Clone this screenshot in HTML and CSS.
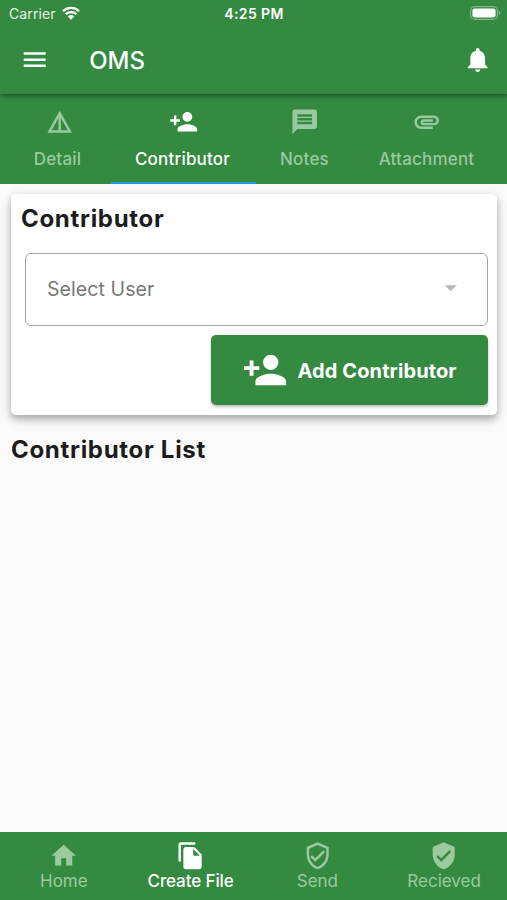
FILE: index.html
```html
<!DOCTYPE html>
<html lang="en">
<head>
<meta charset="utf-8">
<title>OMS</title>
<link rel="stylesheet" href="styles.css">
</head>
<body>
<div class="app">
  <header class="top">
    <div class="status">
      <div class="carrier"><span>Carrier</span>
        <svg class="wifi" viewBox="0 0 18 14"><path d="M1 5.1a11.8 11.8 0 0 1 16 0M3.7 8.2a7.8 7.8 0 0 1 10.6 0" fill="none" stroke="#fff" stroke-width="2.3"/><path d="M5.9 10.5a4.6 4.6 0 0 1 6.2 0L9 13.8z" fill="#fff"/></svg>
      </div>
      <div class="time">4:25 PM</div>
      <svg class="battery" viewBox="0 0 31 14"><rect x=".6" y=".6" width="26.8" height="12.8" rx="4" fill="none" stroke="#fff" stroke-opacity=".4" stroke-width="1.1"/><rect x="2.4" y="2.4" width="23.2" height="9.2" rx="2.4" fill="#fff"/><path d="M28.8 4.8q1.7.8 1.7 2.2t-1.7 2.2z" fill="#fff" fill-opacity=".4"/></svg>
    </div>
    <div class="bar">
      <svg class="icon" viewBox="0 0 24 24"><path d="M3 18h18v-2H3v2zm0-5h18v-2H3v2zm0-7v2h18V6H3z"/></svg>
      <h1>OMS</h1>
      <svg class="icon" viewBox="0 0 24 24"><path d="M12 22c1.1 0 2-.9 2-2h-4c0 1.1.89 2 2 2zm6-6v-5c0-3.07-1.64-5.64-4.5-6.32V4c0-.83-.67-1.5-1.5-1.5s-1.5.67-1.5 1.5v.68C7.63 5.36 6 7.92 6 11v5l-2 2v1h16v-1l-2-2z"/></svg>
    </div>
  </header>
  <nav class="tabs">
    <div class="tab detail"><svg class="icon" viewBox="0 0 24 24"><path d="M12 3L2 21h20L12 3zm1 5.92L18.6 19H13V8.92zm-2 0V19H5.4L11 8.92z"/></svg><span>Detail</span></div>
    <div class="tab active"><svg class="icon" viewBox="0 0 24 24"><path d="M15 12c2.21 0 4-1.79 4-4s-1.79-4-4-4-4 1.79-4 4 1.79 4 4 4zm-9-2V7H4v3H1v2h3v3h2v-3h3v-2H6zm9 4c-2.67 0-8 1.34-8 4v2h16v-2c0-2.66-5.33-4-8-4z"/></svg><span>Contributor</span></div>
    <div class="tab"><svg class="icon" viewBox="0 0 24 24"><path d="M20 2H4c-1.1 0-1.99.9-1.99 2L2 22l4-4h14c1.1 0 2-.9 2-2V4c0-1.1-.9-2-2-2zm-2 12H6v-2h12v2zm0-3H6V9h12v2zm0-3H6V6h12v2z"/></svg><span>Notes</span></div>
    <div class="tab"><svg class="icon" viewBox="0 0 24 24"><path d="M2 12.5C2 9.46 4.46 7 7.5 7H18c2.21 0 4 1.79 4 4s-1.79 4-4 4H9.5C8.12 15 7 13.88 7 12.5S8.12 10 9.5 10H17v2H9.41c-.55 0-.55 1 0 1H18c1.1 0 2-.9 2-2s-.9-2-2-2H7.5C5.57 9 4 10.57 4 12.5S5.57 16 7.5 16H17v2H7.5C4.46 18 2 15.54 2 12.5z"/></svg><span>Attachment</span></div>
  </nav>
  <main>
    <section class="card">
      <h2>Contributor</h2>
      <div class="select"><span>Select User</span><svg class="icon" viewBox="0 0 24 24"><path d="M7 10l5 5 5-5z"/></svg></div>
      <button class="add"><svg viewBox="0 0 24 24"><path d="M15 12c2.21 0 4-1.79 4-4s-1.79-4-4-4-4 1.79-4 4 1.79 4 4 4zm-9-2V7H4v3H1v2h3v3h2v-3h3v-2H6zm9 4c-2.67 0-8 1.34-8 4v2h16v-2c0-2.66-5.33-4-8-4z"/></svg><span>Add Contributor</span></button>
    </section>
    <h2 class="list-title">Contributor List</h2>
  </main>
  <nav class="bottom">
    <div class="item"><svg class="icon" viewBox="0 0 24 24"><path d="M10 20v-6h4v6h5v-8h3L12 3 2 12h3v8z"/></svg><span>Home</span></div>
    <div class="item active"><svg class="icon" viewBox="0 0 24 24"><path d="M15 1H4c-1.1 0-2 .9-2 2v13c0 .55.45 1 1 1s1-.45 1-1V4c0-.55.45-1 1-1h10c.55 0 1-.45 1-1s-.45-1-1-1zm.59 4.59l4.83 4.83c.37.37.58.88.58 1.41V21c0 1.1-.9 2-2 2H7.99C6.89 23 6 22.1 6 21l.01-14c0-1.1.89-2 1.99-2h6.17c.53 0 1.04.21 1.42.59zM15 12h4.5L14 6.500V11c0 .55.45 1 1 1z"/></svg><span>Create File</span></div>
    <div class="item"><svg class="icon" viewBox="0 0 24 24"><path d="M12 1L3 5v6c0 5.55 3.84 10.740 9 12 5.160-1.260 9-6.450 9-12V5l-9-4zm7 10c0 4.520-2.980 8.690-7 9.930-4.020-1.240-7-5.410-7-9.930V6.300l7-3.110 7 3.110V11zm-11.590.59L6 13l4 4 8-8-1.410-1.420L10 14.170z"/></svg><span>Send</span></div>
    <div class="item"><svg class="icon" viewBox="0 0 24 24"><path d="M12 1L3 5v6c0 5.550 3.840 10.740 9 12 5.160-1.260 9-6.450 9-12V5l-9-4zm-2 16l-4-4 1.410-1.410L10 14.170l6.590-6.590L18 9l-8 8z"/></svg><span>Recieved</span></div>
  </nav>
</div>
</body>
</html>
```
FILE: styles.css
```css
* { box-sizing: border-box; }
body { margin: 0; font-family: Inter, "Liberation Sans", sans-serif; }
h1, h2 { margin: 0; }
svg { display: block; flex: none; }
.app { width: 507px; height: 900px; display: flex; flex-direction: column; background: #fafafa; overflow: hidden; }
.icon { width: 29.4px; height: 29.4px; fill: currentColor; }

.top { height: 94px; background: #348a40; color: #fff; position: relative; z-index: 1; box-shadow: 0 2px 5px rgba(0, 0, 0, .42); }
.status { height: 26px; display: grid; grid-template-columns: 1fr auto 1fr; align-items: center; padding: 1px 8px 0 9px; }
.carrier { display: flex; align-items: center; gap: 6px; font-size: 14px; letter-spacing: .1px; color: #e3f1e4; }
.wifi { width: 18px; height: 14px; margin-top: -2px; }
.time { font-size: 14px; font-weight: 600; letter-spacing: .4px; }
.battery { width: 31px; height: 14px; justify-self: end; margin: -2px -2px 0 0; }
.bar { height: 68px; display: flex; align-items: center; padding: 0 14.6px 0 20.300px; }
.bar h1 { flex: 1; margin-left: 39.500px; padding-top: 1px; font-size: 24px; font-weight: 500; line-height: 30px; }

.tabs { height: 90px; flex: none; background: #348a40; color: #99c99f; display: grid; grid-template-columns: 103px 145px 97px 147px; padding-left: 8px; }
.tab { display: flex; flex-direction: column; align-items: center; padding-top: 13.300px; font-size: 17px; font-weight: 500; line-height: 24px; letter-spacing: .2px; }
.tab span { margin-top: 10px; }
.detail span { margin-right: 4px; }
.tab.active { color: #fff; border-bottom: 2.500px solid #2196f3; }
.tab.active span { margin-right: 2px; }

main { flex: 1; padding: 10px 10px 0 11px; color: #1c1c1c; }
.card { height: 221px; background: #fff; border-radius: 5px; padding: 9px 9.5px 10px 10px; display: flex; flex-direction: column; box-shadow: 0 4px 6px rgba(0, 0, 0, .2), 0 5px 12px rgba(0, 0, 0, .12), 0 1px 14px rgba(0, 0, 0, .06); }
h2 { font-size: 24px; font-weight: 650; line-height: 32px; letter-spacing: .7px; }
.select { height: 73px; margin: 18px 0 0 4px; border: 1px solid #a6a6a6; border-radius: 6px; padding: 0 21px; display: flex; align-items: center; justify-content: space-between; color: #777; font-size: 19.6px; letter-spacing: .04px; }
.select span { margin-top: -1px; }
.select .icon { color: #b8b8b8; margin-top: -3px; }
.add { align-self: flex-end; width: 276.5px; height: 70px; margin-top: 9.5px; border: 0; border-radius: 5px; background: #348a40; color: #fff; display: flex; align-items: center; padding: 0 0 0 30.500px; gap: 10px; font: 650 20px Inter, "Liberation Sans", sans-serif; letter-spacing: .1px; box-shadow: 0 2px 3px rgba(0, 0, 0, .25); }
.add svg { width: 46px; height: 46px; fill: currentColor; }
.add span { padding-top: 1px; }
.list-title { margin-top: 19px; }

.bottom { height: 68.5px; flex: none; background: #348a40; color: #9bca9f; display: grid; grid-template-columns: repeat(4, 1fr); }
.item { display: flex; flex-direction: column; align-items: center; padding: 9px 0 0 1px; font-size: 17px; line-height: 22px; }
.item span { margin-top: 0; }
.item.active { color: #fff; font-weight: 500; letter-spacing: -.1px; }
```
